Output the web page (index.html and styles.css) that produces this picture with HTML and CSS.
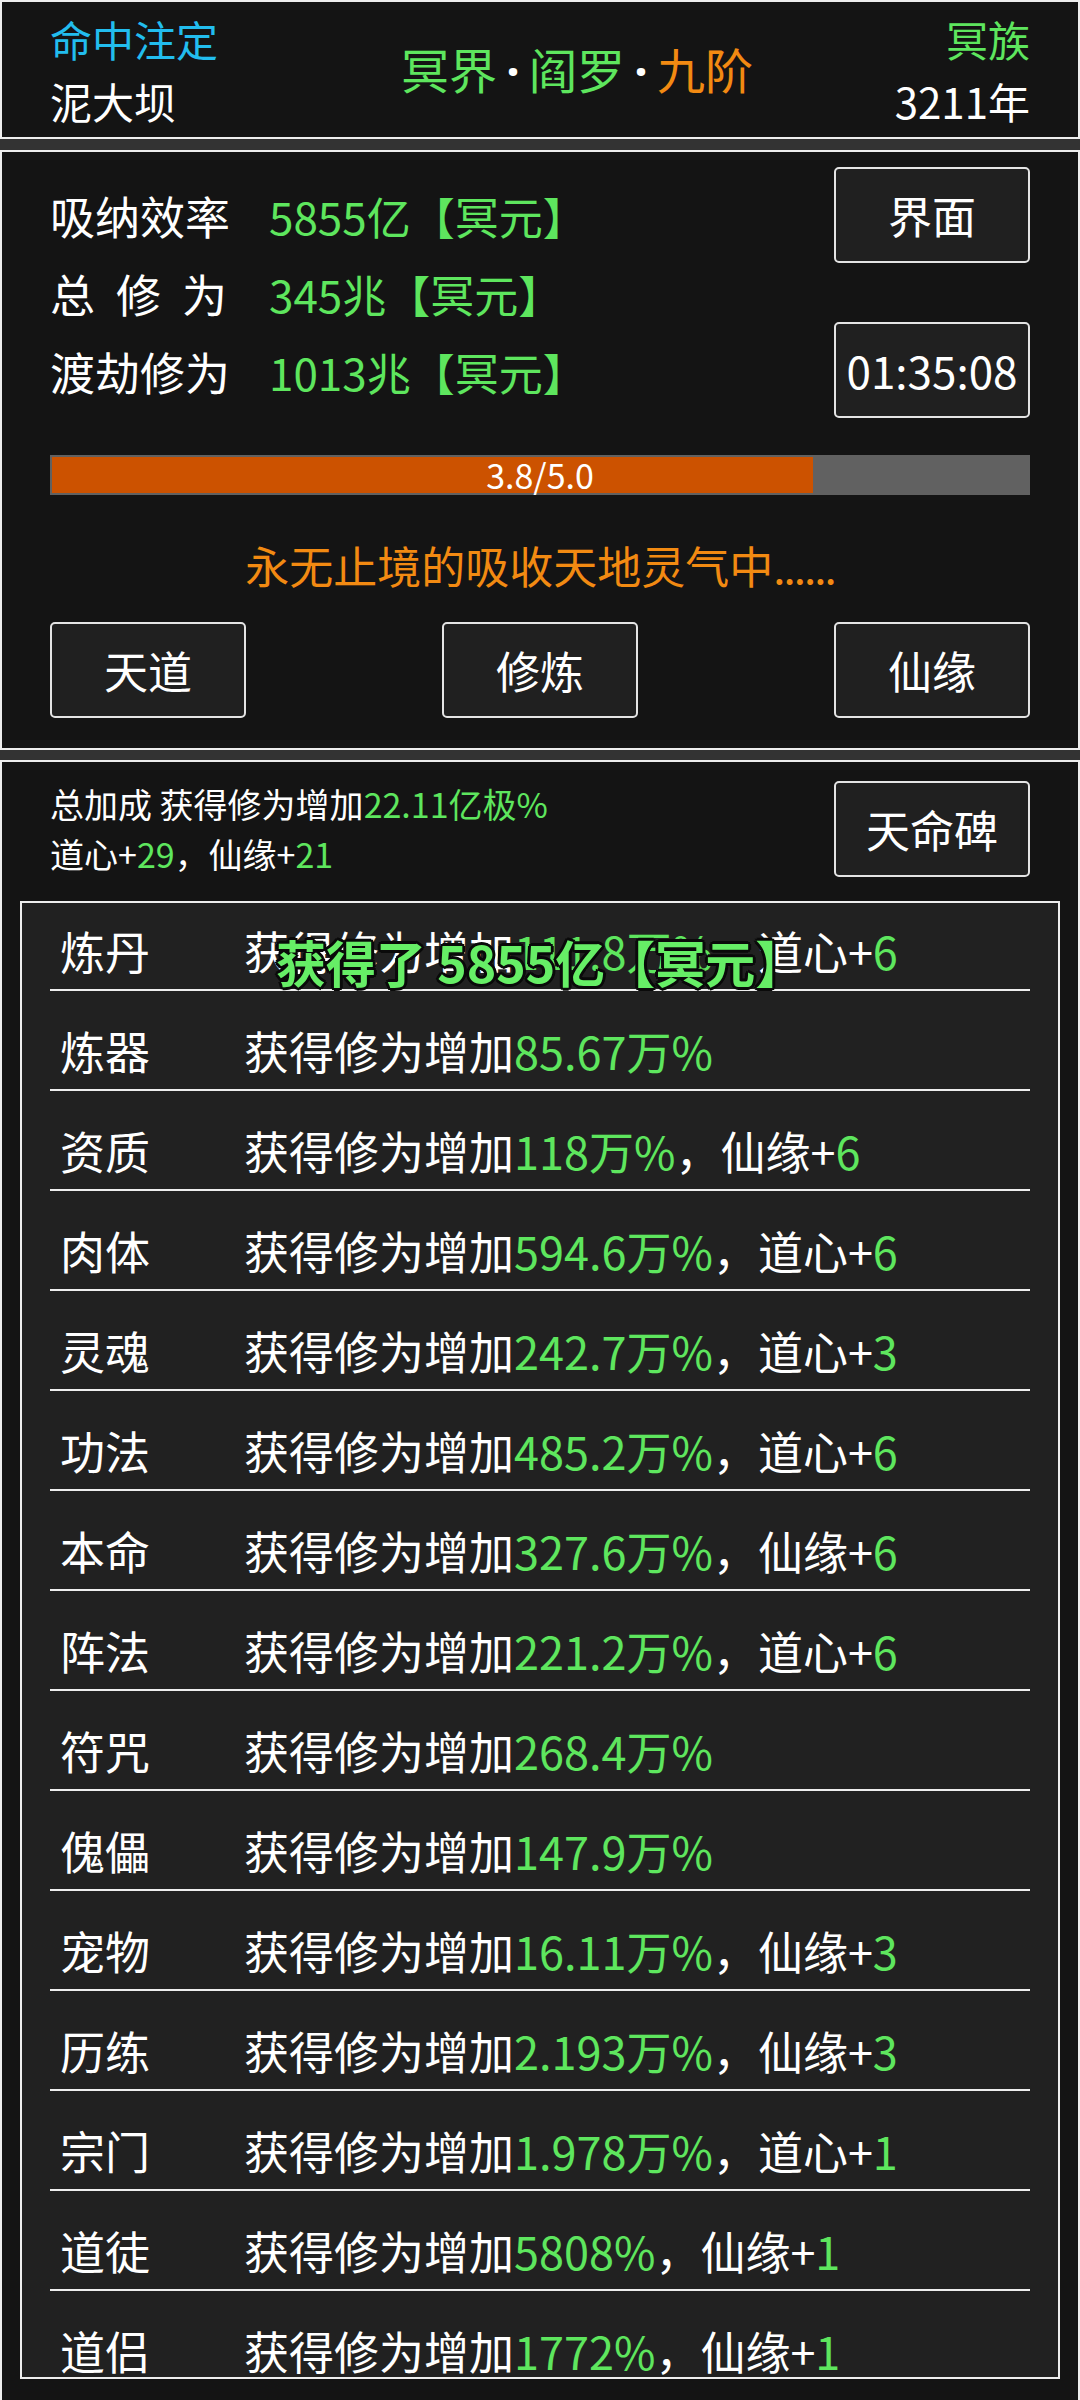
FILE: index.html
```html
<!DOCTYPE html>
<html lang="zh-CN">
<head>
  <meta charset="UTF-8">
  <meta name="viewport" content="width=device-width, initial-scale=1.0">
  <title>冥界·阎罗·九阶</title>
  <link rel="stylesheet" href="styles.css">
</head>
<body>
  <header class="panel top-bar">
    <div class="top-left">
      <div class="fate">命中注定</div>
      <div>泥大坝</div>
    </div>
    <div class="realm">
      <span class="green">冥界</span><span class="dot">·</span><span class="green">阎罗</span><span class="dot">·</span><span class="orange">九阶</span>
    </div>
    <div class="top-right">
      <div class="green">冥族</div>
      <div>3211年</div>
    </div>
  </header>

  <section class="panel cultivate">
    <div class="cultivate-top">
      <div class="stats">
        <div class="stat-row"><span class="stat-label">吸纳效率</span><span class="green">5855亿【冥元】</span></div>
        <div class="stat-row"><span class="stat-label"><span class="spread">总修为</span></span><span class="green">345兆【冥元】</span></div>
        <div class="stat-row"><span class="stat-label">渡劫修为</span><span class="green">1013兆【冥元】</span></div>
      </div>
      <div class="side-btns">
        <button class="box-btn">界面</button>
        <button class="box-btn timer">01:35:08</button>
      </div>
    </div>

    <div class="progress">
      <div class="progress-fill" style="width: 77.7%;"></div>
      <div class="progress-text">3.8/5.0</div>
    </div>

    <p class="status">永无止境的吸收天地灵气中<span class="dots">......</span></p>

    <div class="action-btns">
      <button class="box-btn">天道</button>
      <button class="box-btn">修炼</button>
      <button class="box-btn">仙缘</button>
    </div>
  </section>

  <section class="panel bonus">
    <div class="bonus-summary">
      <div class="summary-text">
        <div>总加成 获得修为增加<span class="green">22.11亿极%</span></div>
        <div>道心+<span class="green">29</span>，仙缘+<span class="green">21</span></div>
      </div>
      <button class="box-btn">天命碑</button>
    </div>

    <div class="bonus-list">
      <div class="rows" id="bonusRows"></div>
      <div class="toast">获得了 5855亿【冥元】</div>
    </div>
  </section>

  <script>
    // Bonus sources: name, percent, optional extra stat
    const bonuses = [
      { name: '炼丹', value: '111.8万%', extra: '道心', amount: 6 },
      { name: '炼器', value: '85.67万%' },
      { name: '资质', value: '118万%', extra: '仙缘', amount: 6 },
      { name: '肉体', value: '594.6万%', extra: '道心', amount: 6 },
      { name: '灵魂', value: '242.7万%', extra: '道心', amount: 3 },
      { name: '功法', value: '485.2万%', extra: '道心', amount: 6 },
      { name: '本命', value: '327.6万%', extra: '仙缘', amount: 6 },
      { name: '阵法', value: '221.2万%', extra: '道心', amount: 6 },
      { name: '符咒', value: '268.4万%' },
      { name: '傀儡', value: '147.9万%' },
      { name: '宠物', value: '16.11万%', extra: '仙缘', amount: 3 },
      { name: '历练', value: '2.193万%', extra: '仙缘', amount: 3 },
      { name: '宗门', value: '1.978万%', extra: '道心', amount: 1 },
      { name: '道徒', value: '5808%', extra: '仙缘', amount: 1 },
      { name: '道侣', value: '1772%', extra: '仙缘', amount: 1 }
    ];

    const rows = document.getElementById('bonusRows');
    bonuses.forEach(item => {
      const row = document.createElement('div');
      row.className = 'bonus-row';
      let html = `<span class="row-name">${item.name}</span>获得修为增加<span class="green">${item.value}</span>`;
      if (item.extra) {
        html += `，${item.extra}+<span class="green">${item.amount}</span>`;
      }
      row.innerHTML = html;
      rows.appendChild(row);
    });
  </script>
</body>
</html>
```

FILE: styles.css
```css
/* General */
body {
  margin: 0;
  width: 1080px;
  background-color: #333333;
  color: #ffffff;
  font-family: "Noto Sans CJK SC", "Noto Sans", sans-serif;
}

.green {
  color: #5ee65e;
}

.orange {
  color: #f28a12;
}

.panel {
  background-color: #141414;
  border: 2px solid #eeeeee;
}

/* Top bar */
.top-bar {
  display: grid;
  grid-template-columns: 351px 1fr auto;
  align-items: center;
  height: 135px;
  padding: 0 48px;
  font-size: 42px;
  line-height: 62px;
}

.fate {
  color: #22bdee;
}

.realm {
  font-size: 48px;
  line-height: 64px;
}

.realm .dot {
  display: inline-block;
  width: 32px;
  text-align: center;
  color: #ffffff;
  font-family: "Noto Sans", sans-serif;
  font-weight: bold;
}

.top-right {
  text-align: right;
}

/* Cultivation panel */
.cultivate {
  margin-top: 11px;
  padding: 15px 48px 30px;
}

.cultivate-top {
  display: flex;
  justify-content: space-between;
  align-items: flex-start;
}

.stats {
  margin-top: 10px;
  font-size: 45px;
  line-height: 77px;
}

.stats .green {
  font-size: 44px;
}

.stat-label {
  display: inline-block;
  width: 219px;
}

.spread {
  letter-spacing: 21px;
}

.side-btns {
  display: flex;
  flex-direction: column;
  gap: 59px;
}

.box-btn {
  width: 196px;
  height: 96px;
  box-sizing: border-box;
  padding: 0;
  border: 2px solid #e4e4e4;
  border-radius: 5px;
  background-color: #202020;
  color: #ffffff;
  font-family: inherit;
  font-size: 44px;
  line-height: 1;
}

.progress {
  display: grid;
  height: 40px;
  margin-top: 37px;
  background-color: #616161;
}

.progress-fill,
.progress-text {
  grid-area: 1 / 1;
}

.progress-fill {
  justify-self: start;
  margin: 2px 0 2px 2px;
  background-color: #cc5200;
}

.progress-text {
  justify-self: center;
  font-size: 34px;
  line-height: 40px;
}

.status {
  margin: 38px 0 25px;
  color: #f28a12;
  font-size: 44px;
  line-height: 64px;
  text-align: center;
}

.status .dots {
  letter-spacing: -2px;
}

.action-btns {
  display: flex;
  justify-content: space-between;
}

/* Bonus panel */
.bonus {
  margin-top: 10px;
  padding-top: 17px;
  height: 1680px;
  box-sizing: border-box;
}

.bonus-summary {
  display: flex;
  justify-content: space-between;
  align-items: center;
  padding: 0 48px;
}

.summary-text {
  font-size: 34px;
  line-height: 50px;
}

.bonus-list {
  position: relative;
  height: 1478px;
  box-sizing: border-box;
  margin: 22px 18px 0;
  border: 2px solid #eeeeee;
  background-color: #212121;
  overflow: hidden;
}

.rows {
  margin-top: -12px;
}

.bonus-row {
  height: 100px;
  box-sizing: border-box;
  margin: 0 28px;
  padding: 38px 0 0 10px;
  border-bottom: 2px solid #eeeeee;
  font-size: 45px;
  line-height: 44px;
  white-space: nowrap;
}

.row-name {
  display: inline-block;
  width: 184px;
}

.toast {
  position: absolute;
  left: 254px;
  top: 28px;
  color: #66ee66;
  font-size: 50px;
  font-weight: bold;
  line-height: 60px;
  white-space: nowrap;
  text-shadow: 3px 0 0 #0a0a0a, -3px 0 0 #0a0a0a, 0 3px 0 #0a0a0a, 0 -3px 0 #0a0a0a,
    2px 2px 0 #0a0a0a, -2px -2px 0 #0a0a0a, 2px -2px 0 #0a0a0a, -2px 2px 0 #0a0a0a;
}
```
